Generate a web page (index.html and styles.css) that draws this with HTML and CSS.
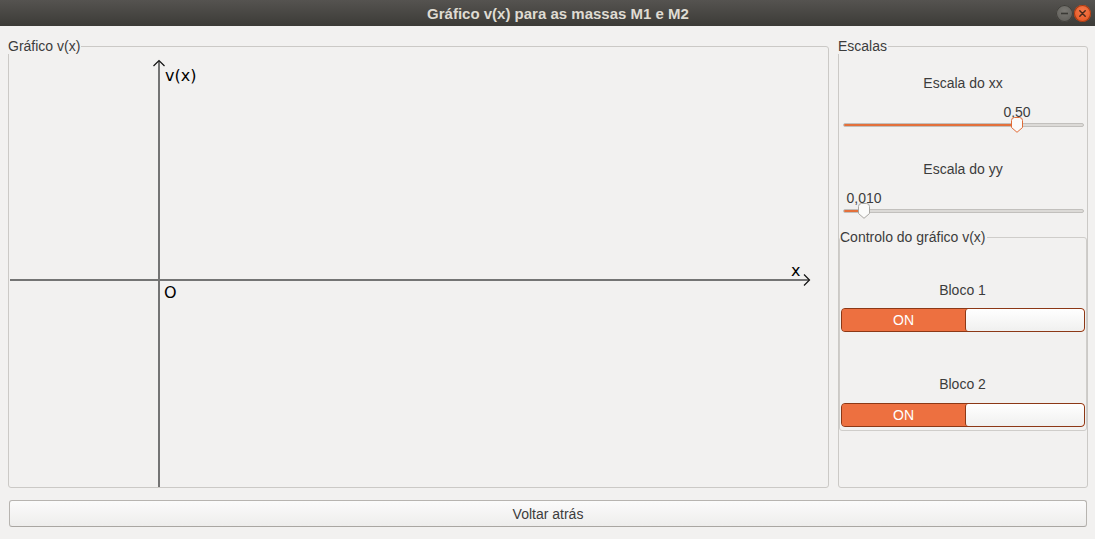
FILE: index.html
```html
<!DOCTYPE html>
<html lang="pt">
<head>
<meta charset="utf-8">
<title>Gráfico v(x) para as massas M1 e M2</title>
<link rel="stylesheet" href="styles.css">
</head>
<body>
<div class="window">
  <header class="titlebar">
    <div class="title">Gráfico v(x) para as massas M1 e M2</div>
    <div class="wm-buttons">
      <span class="wm-btn wm-min">
        <svg width="17" height="17" viewBox="0 0 17 17"><line x1="5" y1="8.5" x2="12" y2="8.5" stroke="#3a3935" stroke-width="1.6"/></svg>
      </span>
      <span class="wm-btn wm-close">
        <svg width="17" height="17" viewBox="0 0 17 17"><path d="M5.8 5.8 L11.2 11.2 M11.2 5.8 L5.8 11.2" stroke="#4a2a1c" stroke-width="1.5" stroke-linecap="round"/></svg>
      </span>
    </div>
  </header>

  <main class="content">
    <div class="panels">
      <section class="group">
        <span class="group-title">Gráfico v(x)</span>
        <svg class="graph" width="819" height="440" viewBox="0 0 819 440">
          <line x1="150" y1="14" x2="150" y2="440" stroke="#747474" stroke-width="2"/>
          <line x1="1" y1="233" x2="800" y2="233" stroke="#747474" stroke-width="2"/>
          <polyline points="144.5,19 150,13.5 155.5,19" fill="none" stroke="#111" stroke-width="1.2"/>
          <polyline points="795,227.5 800.5,233 795,238.5" fill="none" stroke="#111" stroke-width="1.2"/>
          <text x="156" y="34" class="axis-label">v(x)</text>
          <text x="782" y="229" class="axis-label">x</text>
          <text x="155" y="251" class="axis-label">O</text>
        </svg>
      </section>

      <section class="group side">
        <span class="group-title">Escalas</span>

        <div class="scale-label first">Escala do xx</div>
        <div class="slider">
          <div class="slider-value"><span style="left:174px">0,50</span></div>
          <div class="slider-track">
            <div class="groove"><div class="fill" style="width:170px"></div></div>
            <svg class="thumb active" style="left:167px" width="14" height="16" viewBox="0 0 14 16">
              <path d="M1.5 3.5 Q1.5 0.5 4.5 0.5 H9.5 Q12.5 0.5 12.5 3.5 V10.5 L7 15.3 L1.5 10.5 Z"/>
            </svg>
          </div>
        </div>

        <div class="scale-label">Escala do yy</div>
        <div class="slider">
          <div class="slider-value"><span style="left:21px">0,010</span></div>
          <div class="slider-track">
            <div class="groove"><div class="fill" style="width:16px"></div></div>
            <svg class="thumb" style="left:14px" width="14" height="16" viewBox="0 0 14 16">
              <path d="M1.5 3.5 Q1.5 0.5 4.5 0.5 H9.5 Q12.5 0.5 12.5 3.5 V10.5 L7 15.3 L1.5 10.5 Z"/>
            </svg>
          </div>
        </div>

        <section class="group nested">
          <span class="group-title">Controlo do gráfico v(x)</span>
          <div class="block-label first">Bloco 1</div>
          <div class="switch">
            <span class="switch-on">ON</span>
            <span class="switch-knob"></span>
          </div>
          <div class="block-label">Bloco 2</div>
          <div class="switch">
            <span class="switch-on">ON</span>
            <span class="switch-knob"></span>
          </div>
        </section>
      </section>
    </div>

    <button class="back-button" type="button">Voltar atrás</button>
  </main>
</div>
</body>
</html>
```

FILE: styles.css
```css
* {
  box-sizing: border-box;
}

html, body {
  margin: 0;
  padding: 0;
}

body {
  background: #f2f1f0;
  font-family: "Liberation Sans", Arial, sans-serif;
  font-size: 14px;
  color: #3c3c3c;
  overflow: hidden;
}

.window {
  display: flex;
  flex-direction: column;
  height: 539px;
}

/* Title bar */
.titlebar {
  flex: none;
  height: 26px;
  display: flex;
  align-items: center;
  padding: 0 4px 0 60px;
  background: linear-gradient(#555350, #3c3b37);
  color: #dfdbd2;
}

.title {
  flex: 1;
  text-align: center;
  font-family: "Liberation Sans", Arial, sans-serif;
  font-weight: bold;
  font-size: 15px;
}

.wm-buttons {
  display: flex;
  gap: 1px;
  margin-top: 1px;
}

.wm-btn {
  display: block;
  width: 17px;
  height: 17px;
  border-radius: 50%;
}

.wm-btn svg {
  display: block;
}

.wm-min {
  background: radial-gradient(circle at 50% 35%, #7a7873, #5a5954);
  box-shadow: inset 0 0 0 1px #403f3b;
}

.wm-close {
  background: radial-gradient(circle at 50% 35%, #f5794a, #e2501c);
  box-shadow: inset 0 0 0 1px #a63a12;
}

/* Content */
.content {
  flex: 1;
  display: flex;
  flex-direction: column;
  gap: 12px;
  padding: 20px 7px 12px 8px;
  min-height: 0;
}

.panels {
  flex: 1;
  display: grid;
  grid-template-columns: 821px 250px;
  gap: 9px;
  min-height: 0;
}

.group {
  position: relative;
  border: 1px solid #cbc9c6;
  border-radius: 3px;
}

.group-title {
  position: absolute;
  top: -9px;
  left: -1px;
  line-height: 16px;
  padding-right: 1px;
  background: #f2f1f0;
  white-space: nowrap;
}

.graph {
  display: block;
}

.axis-label {
  font-family: "DejaVu Sans", sans-serif;
  font-size: 16px;
  fill: #000;
}

/* Side panel */
.side {
  display: flex;
  flex-direction: column;
}

.scale-label {
  text-align: center;
  line-height: 16px;
  margin-top: 28px;
}

.slider {
  margin: 13px 3px 0 4px;
}

.slider-value {
  position: relative;
  height: 16px;
  line-height: 16px;
}

.slider-value span {
  position: absolute;
  top: 0;
  transform: translateX(-50%);
}

.slider-track {
  position: relative;
  height: 16px;
  margin-top: -3px;
  padding-top: 6px;
}

.groove {
  height: 4px;
  border-radius: 2px;
  background: #dcdad7;
  border: 1px solid #c2c0bd;
  overflow: hidden;
}

.fill {
  height: 100%;
  background: #e3703b;
}

.thumb {
  position: absolute;
  top: 0;
  display: block;
}

.thumb path {
  fill: #fbfbfa;
  stroke: #a8a6a2;
  stroke-width: 1;
}

.thumb.active path {
  stroke: #e06c38;
}

.nested {
  margin-top: 18px;
  padding: 0 1px 3px 0;
  border-color: #cfcdca;
}

.nested .group-title {
  left: 0;
}

.block-label {
  text-align: center;
  line-height: 16px;
  margin-top: 44px;
}

.switch {
  display: flex;
  height: 24px;
  margin: 10px 0 0 1px;
  border: 1px solid #8c3816;
  border-radius: 4px;
  overflow: hidden;
  background: #ed7040;
}

.switch-on {
  width: 123px;
  flex: none;
  text-align: center;
  line-height: 22px;
  color: #fff;
  background: #ed7040;
}

.switch-knob {
  flex: 1;
  border-left: 1px solid #8c3816;
  border-radius: 3px;
  background: linear-gradient(#ffffff, #f0f0ef);
}

.nested .block-label:not(.first) + .switch {
  margin-top: 11px;
}

/* Bottom button */
.back-button {
  flex: none;
  height: 27px;
  margin: 0 1px;
  padding: 0;
  border: 1px solid #b7b4b0;
  border-bottom-color: #a9a6a2;
  border-radius: 3px;
  background: linear-gradient(#fbfbfb, #eeedec);
  font-family: "Liberation Sans", Arial, sans-serif;
  font-size: 14px;
  color: #3c3c3c;
}
```
